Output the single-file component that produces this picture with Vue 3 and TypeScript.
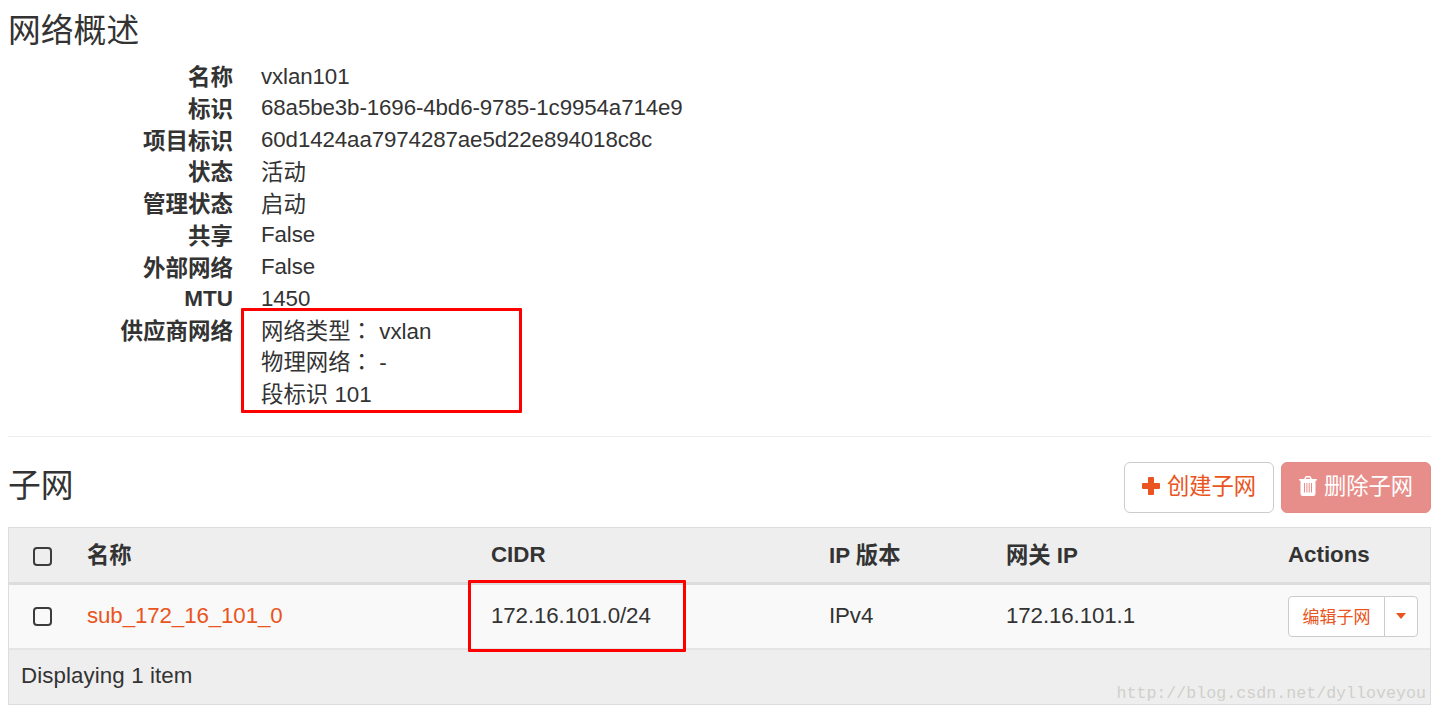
<template>
  <div class="page">
    <section class="overview">
      <h4 class="title">网络概述</h4>
      <dl class="details">
        <template v-for="item in details" :key="item.label">
          <dt :class="{ han: isHan(item.label) }">{{ item.label }}</dt>
          <dd>
            <div v-for="line in item.lines" :key="line.value" :class="{ han: isHan(line.name ?? line.value) }">
              <template v-if="line.name">{{ line.name }}<span class="colon">：</span>&nbsp;</template>{{ line.value }}
            </div>
          </dd>
        </template>
      </dl>
      <div class="marker marker-provider"></div>
    </section>

    <section class="subnets">
      <header class="toolbar">
        <h4 class="title">子网</h4>
        <div class="toolbar-actions">
          <button type="button" class="btn btn-default">
            <svg class="icon" viewBox="0 0 18 18">
              <path d="M7 0h4a1 1 0 0 1 1 1v5h5a1 1 0 0 1 1 1v4a1 1 0 0 1-1 1h-5v5a1 1 0 0 1-1 1H7a1 1 0 0 1-1-1v-5H1a1 1 0 0 1-1-1V7a1 1 0 0 1 1-1h5V1a1 1 0 0 1 1-1z" />
            </svg>
            <span>创建子网</span>
          </button>
          <button type="button" class="btn btn-danger" disabled>
            <svg class="icon icon-trash" viewBox="0 0 18 20">
              <path
                fill-rule="evenodd"
                d="M5 3L6 1.200Q6.500 0 7.500 0h3Q11.500 0 12 1.200L13 3h4.200q.8 0 .8 .6V4.600H0v-1Q0 3 .8 3zM6.800 3h4.400l-.7-1.500h-3zM1.500 4.600h15v12.900q0 2.500-2.500 2.500H4q-2.500 0-2.500-2.500zM5 7v9.500h1V7zM7.400 7v9.500h1V7zM9.700 7v9.500h1V7zM12 7v9.500h1V7z"
              />
            </svg>
            <span>删除子网</span>
          </button>
        </div>
      </header>

      <table class="table">
        <colgroup>
          <col class="col-check" />
          <col class="col-name" />
          <col class="col-cidr" />
          <col class="col-version" />
          <col class="col-gateway" />
          <col class="col-actions" />
        </colgroup>
        <thead>
          <tr>
            <th class="check-cell"><input v-model="allSelected" type="checkbox" /></th>
            <th v-for="column in columns" :key="column" :class="{ 'han-cell': isHan(column) }">{{ column }}</th>
          </tr>
        </thead>
        <tbody>
          <tr v-for="subnet in subnets" :key="subnet.name">
            <td class="check-cell"><input v-model="subnet.selected" type="checkbox" /></td>
            <td><a class="link">{{ subnet.name }}</a></td>
            <td>{{ subnet.cidr }}</td>
            <td>{{ subnet.version }}</td>
            <td>{{ subnet.gateway }}</td>
            <td class="actions-cell">
              <div class="btn-group">
                <button type="button" class="btn-small">编辑子网</button>
                <button type="button" class="btn-small btn-toggle" aria-label="More actions">
                  <span class="caret"></span>
                </button>
              </div>
            </td>
          </tr>
        </tbody>
        <tfoot>
          <tr>
            <td colspan="6">Displaying {{ subnets.length }} item</td>
          </tr>
        </tfoot>
      </table>
      <div class="marker marker-cidr"></div>
    </section>

    <div class="watermark">http://blog.csdn.net/dylloveyou</div>
  </div>
</template>

<script setup lang="ts">
import { computed, ref } from 'vue'

interface DetailLine {
  name?: string
  value: string
}

interface Detail {
  label: string
  lines: DetailLine[]
}

interface Subnet {
  name: string
  cidr: string
  version: string
  gateway: string
  selected: boolean
}

const details: Detail[] = [
  { label: '名称', lines: [{ value: 'vxlan101' }] },
  { label: '标识', lines: [{ value: '68a5be3b-1696-4bd6-9785-1c9954a714e9' }] },
  { label: '项目标识', lines: [{ value: '60d1424aa7974287ae5d22e894018c8c' }] },
  { label: '状态', lines: [{ value: '活动' }] },
  { label: '管理状态', lines: [{ value: '启动' }] },
  { label: '共享', lines: [{ value: 'False' }] },
  { label: '外部网络', lines: [{ value: 'False' }] },
  { label: 'MTU', lines: [{ value: '1450' }] },
  {
    label: '供应商网络',
    lines: [
      { name: '网络类型', value: 'vxlan' },
      { name: '物理网络', value: '-' },
      { value: '段标识 101' }
    ]
  }
]

const columns = ['名称', 'CIDR', 'IP 版本', '网关 IP', 'Actions']

const subnets = ref<Subnet[]>([
  {
    name: 'sub_172_16_101_0',
    cidr: '172.16.101.0/24',
    version: 'IPv4',
    gateway: '172.16.101.1',
    selected: false
  }
])

const allSelected = computed({
  get: () => subnets.value.every((subnet) => subnet.selected),
  set: (value: boolean) => subnets.value.forEach((subnet) => (subnet.selected = value))
})

function isHan(text: string) {
  return /[\u4e00-\u9fff]/.test(text)
}
</script>

<style>
body {
  margin: 0;
  background: #fff;
}
</style>

<style scoped>
.page {
  position: relative;
  box-sizing: border-box;
  height: 714px;
  padding: 12px 6px 0 8px;
  overflow: hidden;
  color: #333;
  font-family: 'Liberation Sans', 'Noto Sans CJK SC', sans-serif;
  font-size: 22.3px;
  line-height: 31.75px;
}

.title {
  margin: 0;
  font-size: 32.8px;
  font-weight: 400;
  line-height: 38px;
}

.overview {
  box-sizing: border-box;
  height: 425px;
  border-bottom: 1px solid #eee;
}

.details {
  display: grid;
  grid-template-columns: 225px 1fr;
  column-gap: 28px;
  margin: 10.5px 0 0;
}

.details dt {
  font-size: 22.5px;
  font-weight: 700;
  text-align: right;
}

.details dd {
  margin: 0;
  letter-spacing: -0.1px;
}

.details dt,
.details dd > div {
  box-sizing: border-box;
  height: 31.75px;
  white-space: nowrap;
}

.details dt.han {
  padding-top: 1.5px;
}

.details dd > .han {
  padding-top: 1px;
  font-size: 22.4px;
  letter-spacing: 0;
}

/* the traditional face centres the fullwidth colon in its box */
.colon {
  font-family: 'Noto Sans CJK TC', sans-serif;
  line-height: 1;
}

.toolbar {
  display: flex;
  justify-content: space-between;
  height: 65px;
  padding-top: 25px;
}

.toolbar .title {
  margin-top: 5px;
}

.toolbar-actions {
  display: flex;
  gap: 7px;
}

.btn {
  display: flex;
  align-items: center;
  justify-content: center;
  gap: 7px;
  box-sizing: border-box;
  width: 150px;
  height: 51px;
  padding: 0 0 1px;
  border: 1px solid #ccc;
  border-radius: 6px;
  font: inherit;
}

.btn-default {
  background: #fff;
  color: #e95420;
}

.btn-danger {
  border-color: #e68a87;
  background: #e78e8b;
  color: #fff;
}

.icon {
  width: 18px;
  height: 18px;
  margin-top: -3px;
  fill: currentColor;
}

.icon-trash {
  height: 20px;
}

.table {
  width: 100%;
  border: 1px solid #ddd;
  border-collapse: separate;
  border-spacing: 0;
  table-layout: fixed;
  background: #f9f9f9;
}

.col-check {
  width: 66px;
}

.col-name {
  width: 404px;
}

.col-cidr {
  width: 338px;
}

.col-version {
  width: 177px;
}

.col-gateway {
  width: 282px;
}

.table th,
.table td {
  box-sizing: border-box;
  padding: 0 12px;
  text-align: left;
  vertical-align: middle;
}

.table th {
  height: 57px;
  border-bottom: 3px solid #ddd;
  background: #eee;
}

.table th.han-cell {
  padding-top: 1.5px;
}

.table tbody td {
  height: 63px;
  padding-bottom: 2px;
  letter-spacing: -0.1px;
}

.table tbody .actions-cell {
  padding-bottom: 0;
  letter-spacing: 0;
}

.table tfoot td {
  height: 56px;
  padding-bottom: 2px;
  border-top: 2px solid #e5e5e5;
  background: #eee;
  letter-spacing: 0.1px;
}

.table .check-cell {
  padding-left: 24px;
}

input[type='checkbox'] {
  display: block;
  box-sizing: border-box;
  width: 19px;
  height: 19px;
  margin: 3px 0 0;
  border: 2px solid #3c3c3c;
  border-radius: 4px;
  appearance: none;
  background: transparent;
}

tbody input[type='checkbox'] {
  margin-top: 2px;
}

input[type='checkbox']:checked {
  background: #333;
}

.link {
  color: #e95420;
}

.btn-group {
  display: flex;
}

.btn-small {
  box-sizing: border-box;
  width: 97px;
  height: 41px;
  padding: 0 0 2px;
  border: 1px solid #ccc;
  border-radius: 4px 0 0 4px;
  background: #fff;
  color: #e95420;
  font-family: inherit;
  font-size: 17px;
}

.btn-toggle {
  display: flex;
  align-items: center;
  justify-content: center;
  width: 34px;
  margin-left: -1px;
  border-radius: 0 4px 4px 0;
}

.caret {
  border-top: 6px solid currentColor;
  border-right: 5px solid transparent;
  border-left: 5px solid transparent;
}

.marker {
  position: absolute;
  box-sizing: border-box;
  border: 3px solid #f00;
  border-radius: 1px;
}

.marker-provider {
  top: 308px;
  left: 241px;
  width: 281px;
  height: 105px;
}

.marker-cidr {
  top: 580px;
  left: 468px;
  width: 218px;
  height: 72px;
}

.watermark {
  position: absolute;
  top: 679px;
  right: 11px;
  color: #d0d0cc;
  font-family: 'Liberation Mono', monospace;
  font-size: 16.65px;
  line-height: 30px;
}
</style>
